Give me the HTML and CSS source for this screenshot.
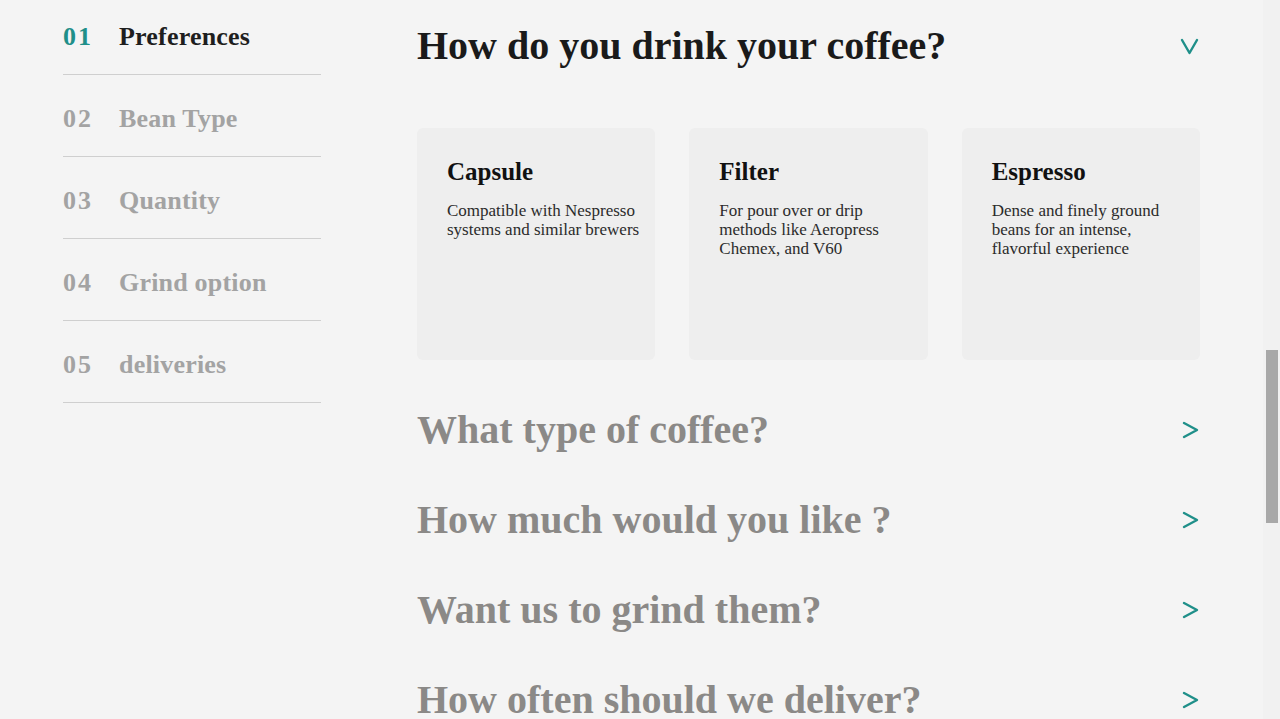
FILE: index.html
```html
<!DOCTYPE html>
<html lang="en">
<head>
<meta charset="utf-8">
<title>Create your plan</title>
<link rel="stylesheet" href="styles.css">
</head>
<body>
<div class="page">
  <div class="content">
    <nav class="sidebar">
      <div class="step active"><span class="num">01</span><span class="label">Preferences</span></div>
      <div class="step"><span class="num">02</span><span class="label">Bean Type</span></div>
      <div class="step"><span class="num">03</span><span class="label">Quantity</span></div>
      <div class="step"><span class="num">04</span><span class="label">Grind option</span></div>
      <div class="step"><span class="num">05</span><span class="label">deliveries</span></div>
    </nav>
    <main class="main">
      <section class="question open">
        <div class="q-head">
          <h2 class="q-title">How do you drink your coffee?</h2>
          <svg class="chev" width="19" height="17" viewBox="0 0 19 17"><polyline points="2,2 9.5,15 17,2" fill="none" stroke="#1f8f89" stroke-width="2.4" stroke-linecap="round" stroke-linejoin="round"/></svg>
        </div>
        <div class="cards">
          <div class="card">
            <h3 class="card-title">Capsule</h3>
            <p class="card-text">Compatible with Nespresso systems and similar brewers</p>
          </div>
          <div class="card">
            <h3 class="card-title">Filter</h3>
            <p class="card-text">For pour over or drip methods like Aeropress Chemex, and V60</p>
          </div>
          <div class="card">
            <h3 class="card-title">Espresso</h3>
            <p class="card-text">Dense and finely ground beans for an intense, flavorful experience</p>
          </div>
        </div>
      </section>
      <section class="row">
        <h2 class="q-title muted">What type of coffee?</h2>
        <svg class="chev" width="17" height="18" viewBox="0 0 17 18"><polyline points="2,2 15,9 2,16" fill="none" stroke="#1f8f89" stroke-width="2.4" stroke-linecap="round" stroke-linejoin="round"/></svg>
      </section>
      <section class="row">
        <h2 class="q-title muted">How much would you like ?</h2>
        <svg class="chev" width="17" height="18" viewBox="0 0 17 18"><polyline points="2,2 15,9 2,16" fill="none" stroke="#1f8f89" stroke-width="2.4" stroke-linecap="round" stroke-linejoin="round"/></svg>
      </section>
      <section class="row">
        <h2 class="q-title muted">Want us to grind them?</h2>
        <svg class="chev" width="17" height="18" viewBox="0 0 17 18"><polyline points="2,2 15,9 2,16" fill="none" stroke="#1f8f89" stroke-width="2.4" stroke-linecap="round" stroke-linejoin="round"/></svg>
      </section>
      <section class="row">
        <h2 class="q-title muted">How often should we deliver?</h2>
        <svg class="chev" width="17" height="18" viewBox="0 0 17 18"><polyline points="2,2 15,9 2,16" fill="none" stroke="#1f8f89" stroke-width="2.4" stroke-linecap="round" stroke-linejoin="round"/></svg>
      </section>
    </main>
  </div>
  <div class="scrollbar"><div class="thumb"></div></div>
</div>
</body>
</html>
```
FILE: styles.css
```css
html, body {
  margin: 0;
  padding: 0;
}
body {
  background: #f4f4f4;
  font-family: "Liberation Serif", "Times New Roman", serif;
  color: #1f1f1f;
}
.page {
  display: flex;
  height: 719px;
  overflow: hidden;
}
.content {
  flex: 1;
  display: flex;
  align-items: flex-start;
  padding-left: 63px;
}
.sidebar {
  width: 258px;
  flex: none;
}
.step {
  display: flex;
  align-items: center;
  padding: 29px 0 22px;
  border-bottom: 1px solid #cfcfcf;
  height: 30px;
  font-size: 26px;
  font-weight: 700;
  color: #a3a3a3;
}
.step:first-child {
  padding-top: 22px;
}
.num {
  width: 56px;
  flex: none;
  letter-spacing: 2px;
}
.label {
  letter-spacing: 0.2px;
}
.step.active .num {
  color: #1f8f89;
}
.step.active .label {
  color: #1e1e1e;
}
.main {
  width: 783px;
  margin-left: 96px;
  flex: none;
}
.q-head {
  display: flex;
  justify-content: space-between;
  align-items: center;
  margin-top: 22px;
  height: 48px;
}
.q-title {
  margin: 0;
  font-size: 40px;
  line-height: 48px;
  font-weight: 700;
  color: #1a1a1a;
}
.q-title.muted {
  color: #8b8987;
}
.chev {
  flex: none;
  margin-right: 1px;
}
.cards {
  display: grid;
  grid-template-columns: repeat(3, 1fr);
  gap: 34px;
  margin-top: 58px;
  margin-bottom: 25px;
}
.card {
  background: #eeeeee;
  border-radius: 6px;
  height: 232px;
  box-sizing: border-box;
  padding: 30px 8px 0 30px;
}
.card-title {
  margin: 0;
  font-size: 25px;
  line-height: 28px;
  font-weight: 700;
  color: #111;
}
.card-text {
  margin: 15px 0 0;
  max-width: 202px;
  font-size: 17px;
  line-height: 19px;
  color: #2b2b2b;
}
.row {
  display: flex;
  justify-content: space-between;
  align-items: center;
  height: 90px;
}
.scrollbar {
  width: 17px;
  flex: none;
  background: #f1f1f1;
  box-sizing: border-box;
  padding: 350px 2px 0 3px;
}
.thumb {
  height: 173px;
  background: #a8a8a8;
}
```
